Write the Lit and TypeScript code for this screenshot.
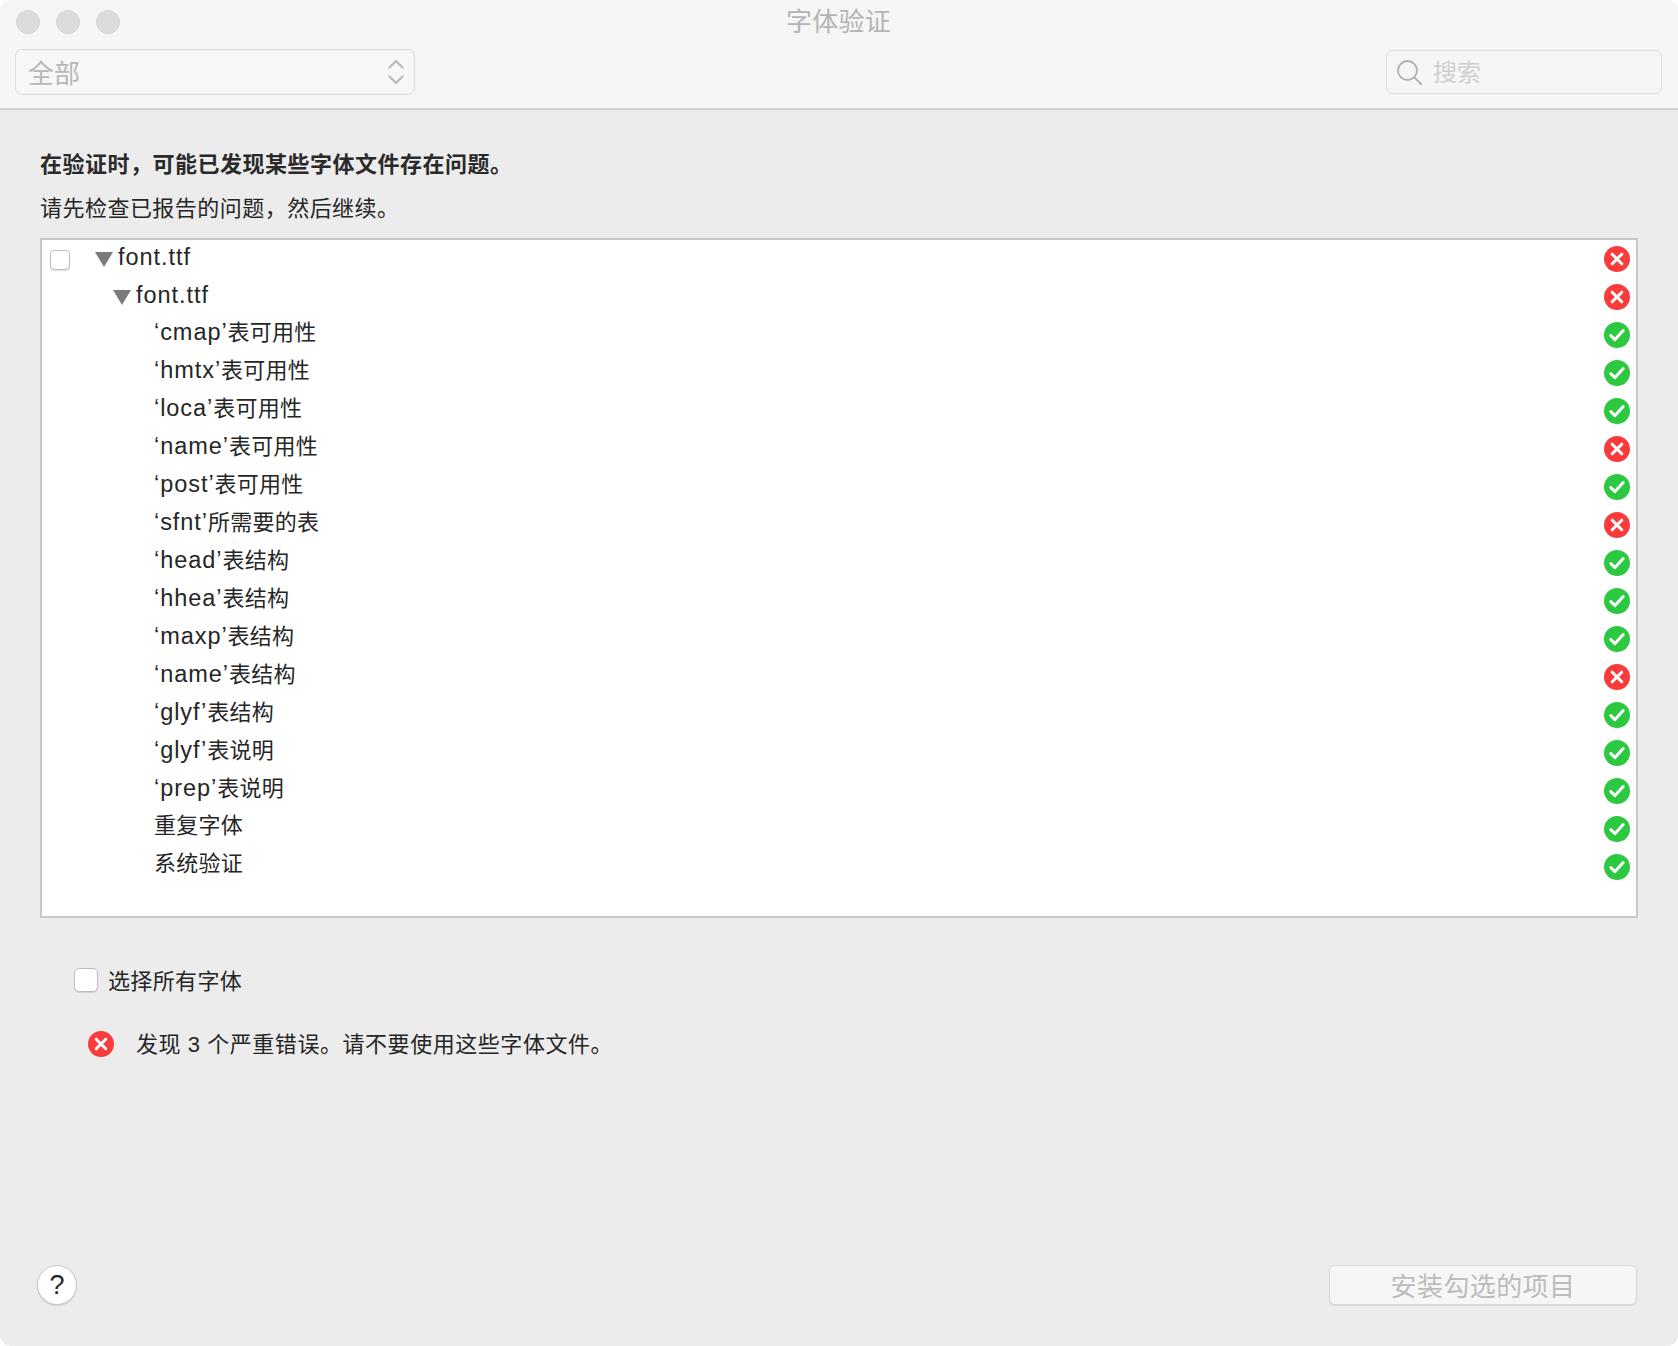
import { LitElement, html, css } from "lit";
import { customElement } from "lit/decorators.js";

const err = (size: number) => html`<svg class="st" width=${size} height=${size} viewBox="0 0 26 26"><circle cx="13" cy="13" r="13" fill="#f93b3b"/><path d="M8.2 8.2l9.6 9.6M17.8 8.2l-9.6 9.6" stroke="#fff" stroke-width="3" stroke-linecap="round" fill="none"/></svg>`;
const ok = (size: number) => html`<svg class="st" width=${size} height=${size} viewBox="0 0 26 26"><circle cx="13" cy="13" r="13" fill="#2bc840"/><path d="M6.8 13.6l4.2 4 8.2-9" stroke="#fff" stroke-width="3" stroke-linecap="round" stroke-linejoin="round" fill="none"/></svg>`;

type Row = { q?: string; rest?: string; text?: string; good: boolean };
const rows: Row[] = [
  { q: "cmap", rest: "表可用性", good: true },
  { q: "hmtx", rest: "表可用性", good: true },
  { q: "loca", rest: "表可用性", good: true },
  { q: "name", rest: "表可用性", good: false },
  { q: "post", rest: "表可用性", good: true },
  { q: "sfnt", rest: "所需要的表", good: false },
  { q: "head", rest: "表结构", good: true },
  { q: "hhea", rest: "表结构", good: true },
  { q: "maxp", rest: "表结构", good: true },
  { q: "name", rest: "表结构", good: false },
  { q: "glyf", rest: "表结构", good: true },
  { q: "glyf", rest: "表说明", good: true },
  { q: "prep", rest: "表说明", good: true },
  { text: "重复字体", good: true },
  { text: "系统验证", good: true },
];

@customElement("app-root")
export class AppRoot extends LitElement {
  static styles = css`
    :host { display: block; width: 1678px; height: 1346px; background: #fff; font-family: "Liberation Sans", "Noto Sans CJK SC", sans-serif; color: #262626; font-size: 22px; }
    .win { width: 1678px; height: 1346px; background: #ececec; border-radius: 11px; overflow: hidden; display: flex; flex-direction: column; box-sizing: border-box; }
    .bar { height: 110px; box-sizing: border-box; background: #f6f6f6; border-bottom: 2px solid #d2d2d2; padding: 10px 16px 0 15px; display: flex; flex-direction: column; }
    .top { display: grid; grid-template-columns: 1fr auto 1fr; align-items: center; height: 24px; }
    .lights { display: flex; gap: 16px; padding-left: 1px; }
    .light { width: 24px; height: 24px; border-radius: 50%; background: #dcdcdc; box-sizing: border-box; border: 1px solid #d3d3d3; }
    .title { font-size: 26px; color: #b4b4b4; line-height: 24px; letter-spacing: 0.2px; }
    .tools { display: flex; justify-content: space-between; align-items: center; margin-top: 15px; }
    .select { width: 400px; height: 46px; box-sizing: border-box; border: 1.5px solid #dadada; border-radius: 7px; background: #f7f7f7; display: flex; align-items: center; justify-content: space-between; padding: 0 9px 0 12px; font-size: 26px; color: #b8b8b8; }
    .select span { padding-bottom: 2px; }
    .search { width: 276px; height: 44px; box-sizing: border-box; border: 1.5px solid #dedede; border-radius: 7px; display: flex; align-items: center; gap: 10px; padding-left: 10px; font-size: 24px; color: #cfcfcf; }
    .search span { padding-bottom: 4px; }
    .main { flex: 1; display: flex; flex-direction: column; padding: 0 40px; }
    .h1 { font-weight: 700; font-size: 22px; line-height: 30px; margin-top: 40px; color: #2a2a2a; letter-spacing: 0.5px; }
    .h2 { line-height: 30px; margin-top: 14px; color: #262626; letter-spacing: 0.47px; }
    .list { margin-top: 14px; width: 1598px; height: 680px; box-sizing: border-box; border: 2px solid #c8c8c8; background: #fff; display: flex; flex-direction: column; }
    .row { height: 38px; display: flex; align-items: center; flex: none; padding-right: 6px; }
    .label { flex: 1; font-size: 22px; line-height: 38px; padding-bottom: 6px; white-space: pre; letter-spacing: 0.25px; }
    .head .label { padding-bottom: 4px; }
    .lat { font-size: 23.5px; letter-spacing: 0.95px; }
    .cb { width: 20px; height: 20px; box-sizing: border-box; border: 1.5px solid #bdbdbd; border-radius: 4px; background: #fff; box-shadow: 0 1px 1px rgba(0,0,0,.12); flex: none; }
    .head .cb { margin-top: 1px; }
    .tri { width: 0; height: 0; border-left: 9px solid transparent; border-right: 9px solid transparent; border-top: 15px solid #7b7b7b; flex: none; margin-right: 5px; }
    .r0 { padding-left: 8px; }
    .r0 .tri { margin-left: 25px; }
    .r1 { padding-left: 71px; }
    .r2 { padding-left: 112px; }
    .st { flex: none; display: block; }
    .all { display: flex; align-items: center; margin: 50px 0 0 34px; height: 24px; gap: 10px; letter-spacing: 0.35px; }
    .all span:last-child { padding-bottom: 2px; }
    .all .cb { width: 24px; height: 24px; border-radius: 5px; }
    .msg { display: flex; align-items: center; margin: 39px 0 0 48px; height: 26px; gap: 22px; letter-spacing: 0.55px; }
    .msg span { padding-bottom: 4px; }
    .foot { margin-top: auto; margin-bottom: 41px; display: flex; justify-content: space-between; align-items: center; }
    .help { width: 40px; height: 40px; box-sizing: border-box; margin-left: -3px; border-radius: 50%; background: #fff; border: 1px solid #c6c6c6; box-shadow: 0 1px 1px rgba(0,0,0,.12); display: flex; align-items: center; justify-content: center; font-size: 27px; color: #262626; }
    .btn { width: 308px; height: 40px; margin-right: 1px; padding-bottom: 2px; box-sizing: border-box; border: 1px solid #d9d9d9; border-radius: 6px; background: #f6f6f6; box-shadow: 0 1px 1px rgba(0,0,0,.1); display: flex; align-items: center; justify-content: center; font-size: 26px; letter-spacing: 0.4px; color: #bcbcbc; }
  `;

  private label(r: Row) {
    if (r.text) return html`<span class="label">${r.text}</span>`;
    return html`<span class="label"><span class="lat">‘${r.q}’</span>${r.rest}</span>`;
  }

  render() {
    return html`<div class="win">
      <header class="bar">
        <div class="top">
          <div class="lights"><span class="light"></span><span class="light"></span><span class="light"></span></div>
          <div class="title">字体验证</div>
          <div></div>
        </div>
        <div class="tools">
          <div class="select"><span>全部</span>
            <svg width="18" height="28" viewBox="0 0 18 28" fill="none" stroke="#bdbdbd" stroke-width="2.4" stroke-linecap="round" stroke-linejoin="round"><path d="M2.5 9.5L9 3l6.5 6.5M2.5 18.5L9 25l6.5-6.5"/></svg>
          </div>
          <div class="search">
            <svg width="26" height="26" viewBox="0 0 26 26" fill="none" stroke="#b0b0b0" stroke-width="1.8" stroke-linecap="round"><circle cx="10.5" cy="11.5" r="9.5"/><path d="M17.5 18.5l6.5 6.5"/></svg>
            <span>搜索</span>
          </div>
        </div>
      </header>
      <main class="main">
        <div class="h1">在验证时，可能已发现某些字体文件存在问题。</div>
        <div class="h2">请先检查已报告的问题，然后继续。</div>
        <div class="list">
          <div class="row r0 head"><span class="cb"></span><span class="tri"></span><span class="label"><span class="lat">font.ttf</span></span>${err(26)}</div>
          <div class="row r1 head"><span class="tri"></span><span class="label"><span class="lat">font.ttf</span></span>${err(26)}</div>
          ${rows.map((r) => html`<div class="row r2">${this.label(r)}${r.good ? ok(26) : err(26)}</div>`)}
        </div>
        <div class="all"><span class="cb"></span><span>选择所有字体</span></div>
        <div class="msg">${err(26)}<span>发现 3 个严重错误。请不要使用这些字体文件。</span></div>
        <div class="foot"><div class="help">?</div><div class="btn">安装勾选的项目</div></div>
      </main>
    </div>`;
  }
}
